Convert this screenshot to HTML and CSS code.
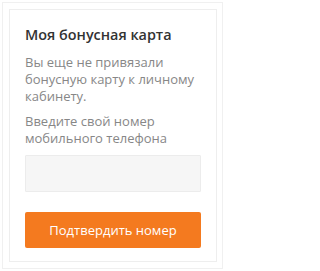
FILE: index.html
```html
<!DOCTYPE html>
<html lang="ru">
<head>
<meta charset="utf-8">
<link rel="stylesheet" href="styles.css">
</head>
<body>
<div class="frame">
  <div class="card">
    <h2 class="title">Моя бонусная карта</h2>
    <p class="text">Вы еще не привязали бонусную карту к личному кабинету.</p>
    <p class="text label">Введите свой номер мобильного телефона</p>
    <input class="phone" type="text">
    <button class="btn" type="button">Подтвердить номер</button>
  </div>
</div>
</body>
</html>
```
FILE: styles.css
```css
html, body {
  margin: 0;
  padding: 0;
  background: #fff;
}
body {
  padding: 2px 2px 2px 2px;
  font-family: "Open Sans", "Liberation Sans", sans-serif;
}
.frame {
  width: 221px;
  height: 267px;
  box-sizing: border-box;
  border: 1px solid #f0f0f0;
  padding: 6px 5px 5px 6px;
}
.card {
  box-sizing: border-box;
  width: 208px;
  border: 1px solid #eeeeee;
  padding: 15px 15px 13px 15px;
  display: flex;
  flex-direction: column;
}
.title {
  margin: 0;
  font-size: 14.4px;
  line-height: 19px;
  font-weight: 600;
  color: #333;
}
.text {
  margin: 10px 0 0 0;
  font-size: 13px;
  line-height: 17px;
  color: #878787;
}
.label {
  margin-top: 8px;
}
.phone {
  margin: 8px 0 0 0;
  height: 37px;
  box-sizing: border-box;
  border: 1px solid #ececec;
  background: #f6f6f6;
  border-radius: 1px;
  outline: none;
  padding: 0 10px;
}
.btn {
  margin-top: 20px;
  height: 36px;
  border: none;
  border-radius: 2px;
  background: #f47a1f;
  color: #fff;
  font-family: "Open Sans", "Liberation Sans", sans-serif;
  font-size: 13px;
  padding: 0;
}
```
